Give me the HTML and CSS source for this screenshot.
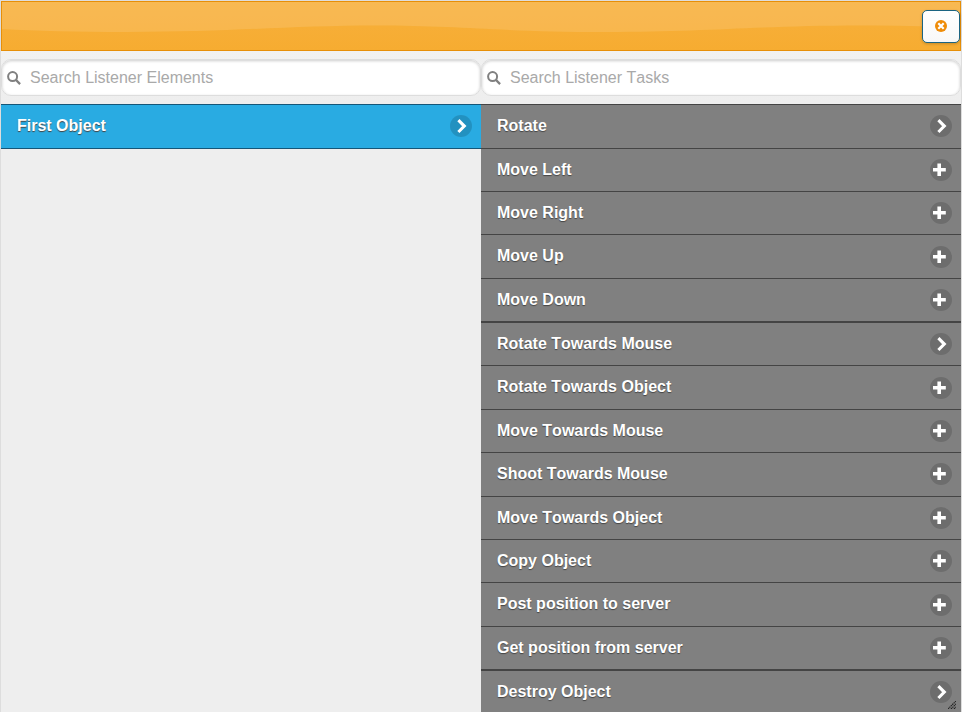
FILE: index.html
```
<!DOCTYPE html>
<html lang="en">
<head>
<meta charset="utf-8">
<title>Listener</title>
<link rel="stylesheet" href="styles.css">
</head>
<body>
<svg class="defs" width="0" height="0">
  <symbol id="chevron" viewBox="0 0 22 22"><circle cx="11" cy="11" r="11" fill="#000" fill-opacity=".15"/><path d="M8.4 5.2 14.3 11.1 8.4 17" fill="none" stroke="#fff" stroke-width="3.1"/></symbol>
  <symbol id="plus" viewBox="0 0 22 22"><circle cx="11" cy="11" r="11" fill="#000" fill-opacity=".15"/><path d="M3 9H7.4V4.4H11V9H15.8V12.5H11V17H7.4V12.5H3Z" fill="#fff"/></symbol>
  <symbol id="search" viewBox="0 0 14 14"><circle cx="5.6" cy="5.6" r="4.5" fill="none" stroke="#808080" stroke-width="2"/><path d="m8.9 8.9 4.2 4.2" stroke="#808080" stroke-width="2.2"/></symbol>
</svg>
<div class="dialog">
  <header class="header">
    <svg class="wave" viewBox="0 0 960 48" preserveAspectRatio="none"><path d="M0 0H960V26Q915 23 861 23.5C760 23.5 710 30 605 30S460 23.5 375 23.5 230 30 125 30Q50 30 0 27Z" fill="#fff" fill-opacity=".12"/></svg>
    <button class="close" aria-label="Close"><svg width="12" height="12" viewBox="0 0 12 12"><circle cx="6" cy="6" r="6" fill="#ef8c08"/><path d="m3.3 3.3 5.4 5.4m0-5.4-5.4 5.4" stroke="#fff" stroke-width="2.2"/></svg></button>
  </header>
  <main class="columns">
    <section>
      <div class="search"><svg><use href="#search"/></svg><input placeholder="Search Listener Elements"></div>
      <ul class="list elements">
        <li><span>First Object</span><svg><use href="#chevron"/></svg></li>
      </ul>
    </section>
    <section>
      <div class="search"><svg><use href="#search"/></svg><input placeholder="Search Listener Tasks"></div>
      <ul class="list tasks">
        <li><span>Rotate</span><svg><use href="#chevron"/></svg></li>
        <li><span>Move Left</span><svg><use href="#plus"/></svg></li>
        <li><span>Move Right</span><svg><use href="#plus"/></svg></li>
        <li class="low"><span>Move Up</span><svg><use href="#plus"/></svg></li>
        <li><span>Move Down</span><svg><use href="#plus"/></svg></li>
        <li class="thick"><span>Rotate Towards Mouse</span><svg><use href="#chevron"/></svg></li>
        <li class="low"><span>Rotate Towards Object</span><svg><use href="#plus"/></svg></li>
        <li><span>Move Towards Mouse</span><svg><use href="#plus"/></svg></li>
        <li><span>Shoot Towards Mouse</span><svg><use href="#plus"/></svg></li>
        <li><span>Move Towards Object</span><svg><use href="#plus"/></svg></li>
        <li><span>Copy Object</span><svg><use href="#plus"/></svg></li>
        <li class="low"><span>Post position to server</span><svg><use href="#plus"/></svg></li>
        <li><span>Get position from server</span><svg><use href="#plus"/></svg></li>
        <li class="thick"><span>Destroy Object</span><svg><use href="#chevron"/></svg></li>
      </ul>
    </section>
  </main>
  <svg class="grip" width="8" height="8" viewBox="0 0 8 8"><path d="M0 8 8 0M3 8 8 3M6 8 8 6" stroke="#222" stroke-width="1.2" stroke-dasharray="1.4 .6"/></svg>
</div>
</body>
</html>
```
FILE: styles.css
```
* { box-sizing: border-box; }
html, body { height: 100%; margin: 0; overflow: hidden; }
body { font: 16px "Liberation Sans", Arial, sans-serif; font-kerning: none; background: #eee; }
.defs { display: block; }
.dialog {
  position: relative;
  height: 712px;
  border: 1px solid #ddd;
  border-bottom: 0;
  background: #eee;
}
.header {
  position: relative;
  display: flex;
  justify-content: flex-end;
  height: 50px;
  padding: 8px 0 0;
  border: 1px solid #e78f08;
  background: linear-gradient(#f8b03c, #f6ac31);
}
.wave { position: absolute; left: 0; top: 0; width: 100%; height: 100%; }
.close {
  position: relative;
  display: flex;
  align-items: center;
  justify-content: center;
  width: 38px;
  height: 33px;
  padding: 0 0 1px;
  border: 1px solid #1b6482;
  border-radius: 5px;
  background: linear-gradient(#fff, #f8f8f8);
  box-shadow: 0 1px 3px rgba(0, 0, 0, .2);
}
.columns { display: grid; grid-template-columns: 480px 480px; }
.columns section { height: 661px; background: linear-gradient(#f1f1f1, #eee 50px); overflow: hidden; }
.search {
  display: flex;
  align-items: center;
  height: 37px;
  margin: 8px 0;
  padding-left: 5px;
  border: 1px solid #ddd;
  border-radius: 10px;
  background: #fff;
  box-shadow: inset 0 1px 3px rgba(0, 0, 0, .2);
}
.search svg { width: 14px; height: 14px; margin-right: 9px; }
.search input {
  flex: 1;
  padding: 0;
  border: 0;
  outline: 0;
  background: none;
  font: inherit;
  font-kerning: none;
}
.search input::placeholder { color: #a9a9a9; opacity: 1; }
.list { display: grid; margin: 0; padding: 0; list-style: none; }
.list li {
  display: flex;
  justify-content: space-between;
  padding: 11px 9px 0 16px;
  border-top: 1px solid #444;
  background: #808080;
  color: #fff;
  font-weight: 700;
  line-height: 20px;
  text-shadow: 0 1px 1px #444;
}
.list svg { width: 22px; height: 22px; margin-top: -1px; }
.elements { grid-template-rows: 45px; }
.elements li {
  border-top-color: #155678;
  border-bottom: 1px solid #155678;
  background: #29abe2;
}
.tasks { grid-template-rows: 44px 43px 43px 44px 43px 44px 44px 43px 44px 43px 43px 44px 43px 44px; }
.list .thick { border-top-width: 2px; }
.list .low svg { margin-top: 0; }
.grip { position: absolute; right: 5px; bottom: 3px; }
```
